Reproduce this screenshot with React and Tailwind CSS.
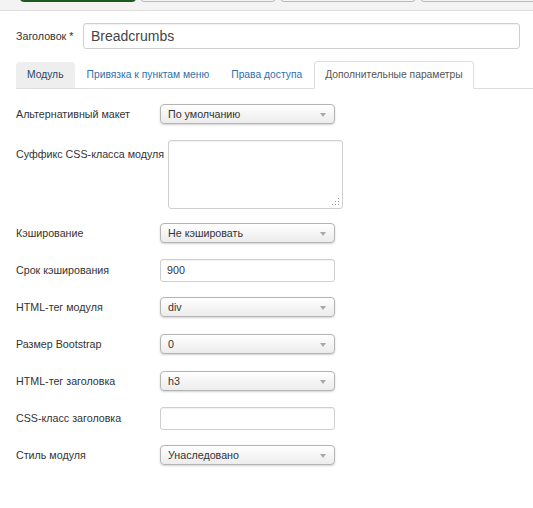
import React from "react";

const font = { fontFamily: '"Liberation Sans", Arial, sans-serif' };

function SelectBox({ value }) {
  return (
    <div className="relative h-[20px] w-[175px] rounded-[4px] border border-[#b4b4b4] bg-gradient-to-b from-white to-[#ececec] shadow-[0_1px_2px_rgba(0,0,0,0.18)] flex items-center pl-[7px] text-[10.7px] text-[#333]">
      <span>{value}</span>
      <span className="absolute right-[8px] top-[8px] h-0 w-0 border-l-[3px] border-r-[3px] border-t-[4px] border-l-transparent border-r-transparent border-t-[#a8a8a8]" />
    </div>
  );
}

function TextBox({ value = "" }) {
  return (
    <div className="h-[23px] w-[175px] rounded-[3px] border border-[#cfcfcf] bg-white shadow-[inset_0_1px_1px_rgba(0,0,0,0.06)] flex items-center pl-[6px] text-[10.7px] text-[#333]">
      {value}
    </div>
  );
}

function Row({ label, children, top = false }) {
  return (
    <div className={`flex ${top ? "items-start mb-[13px]" : "items-center h-[22px] mb-[15px]"}`}>
      <div className={`min-w-[140px] mr-[4px] whitespace-nowrap text-[10.7px] text-[#333] ${top ? "pt-[6px]" : ""}`}>
        {label}
      </div>
      {children}
    </div>
  );
}

export default function App() {
  return (
    <div className="w-[533px] h-[508px] bg-white overflow-hidden" style={font}>
      {/* toolbar strip */}
      <div className="h-[11px] bg-[#f3f3f3] border-b border-[#dedede] overflow-hidden flex gap-[4px] pl-[20px]">
        <div className="shrink-0 mt-[-18px] h-[20px] w-[116px] rounded-b-[4px] bg-[#3d8b3d] border-b-2 border-[#1e5a1e]" />
        <div className="shrink-0 mt-[-18px] h-[20px] w-[136px] rounded-b-[4px] bg-[#f5f5f5] border border-[#b8b8b8]" />
        <div className="shrink-0 mt-[-18px] h-[20px] w-[136px] rounded-b-[4px] bg-[#f5f5f5] border border-[#b8b8b8]" />
        <div className="shrink-0 mt-[-18px] h-[20px] w-[136px] rounded-b-[4px] bg-[#f5f5f5] border border-[#b8b8b8]" />
      </div>

      {/* title */}
      <div className="flex items-center pl-[16px] pt-[12px]">
        <div className="w-[67px] text-[10.7px] text-[#333]">Заголовок *</div>
        <div className="h-[26px] w-[437px] rounded-[3px] border border-[#cfcfcf] bg-white flex items-center pl-[7px] text-[14px] text-[#444] shadow-[inset_0_1px_1px_rgba(0,0,0,0.06)]">
          Breadcrumbs
        </div>
      </div>

      {/* tabs */}
      <div className="ml-[16px] mt-[12px] flex items-end h-[28px] border-b border-[#dddddd] text-[10.3px]">
        <div className="h-[27px] px-[11px] mr-[2px] flex items-center rounded-t-[4px] bg-[#eeeeee] text-[#2b4564] mb-[-1px] border-b border-[#dddddd]">
          Модуль
        </div>
        <div className="h-[27px] px-[10px] mr-[2px] flex items-center text-[#3071a9]">Привязка к пунктам меню</div>
        <div className="h-[27px] px-[10px] mr-[2px] flex items-center text-[#3071a9]">Права доступа</div>
        <div className="h-[28px] px-[10px] flex items-center rounded-t-[4px] border border-[#dddddd] border-b-white bg-white text-[#555] mb-[-1px]">
          Дополнительные параметры
        </div>
      </div>

      {/* options */}
      <div className="pl-[16px] pt-[14px]">
        <Row label="Альтернативный макет">
          <SelectBox value="По умолчанию" />
        </Row>
        <Row label="Суффикс CSS-класса модуля" top>
          <div className="relative h-[69px] w-[175px] rounded-[3px] border border-[#cfcfcf] bg-white shadow-[inset_0_1px_1px_rgba(0,0,0,0.06)]">
            <svg className="absolute right-[2px] bottom-[2px]" width="9" height="8" viewBox="0 0 9 8">
              <rect x="7" y="0" width="1" height="1" fill="#9a9a9a" />
              <rect x="4" y="3" width="1" height="1" fill="#9a9a9a" />
              <rect x="7" y="3" width="1" height="1" fill="#9a9a9a" />
              <rect x="1" y="6" width="1" height="1" fill="#9a9a9a" />
              <rect x="4" y="6" width="1" height="1" fill="#9a9a9a" />
              <rect x="7" y="6" width="1" height="1" fill="#9a9a9a" />
            </svg>
          </div>
        </Row>
        <Row label="Кэширование">
          <SelectBox value="Не кэшировать" />
        </Row>
        <Row label="Срок кэширования">
          <TextBox value="900" />
        </Row>
        <Row label="HTML-тег модуля">
          <SelectBox value="div" />
        </Row>
        <Row label="Размер Bootstrap">
          <SelectBox value="0" />
        </Row>
        <Row label="HTML-тег заголовка">
          <SelectBox value="h3" />
        </Row>
        <Row label="CSS-класс заголовка">
          <TextBox />
        </Row>
        <Row label="Стиль модуля">
          <SelectBox value="Унаследовано" />
        </Row>
      </div>
    </div>
  );
}
